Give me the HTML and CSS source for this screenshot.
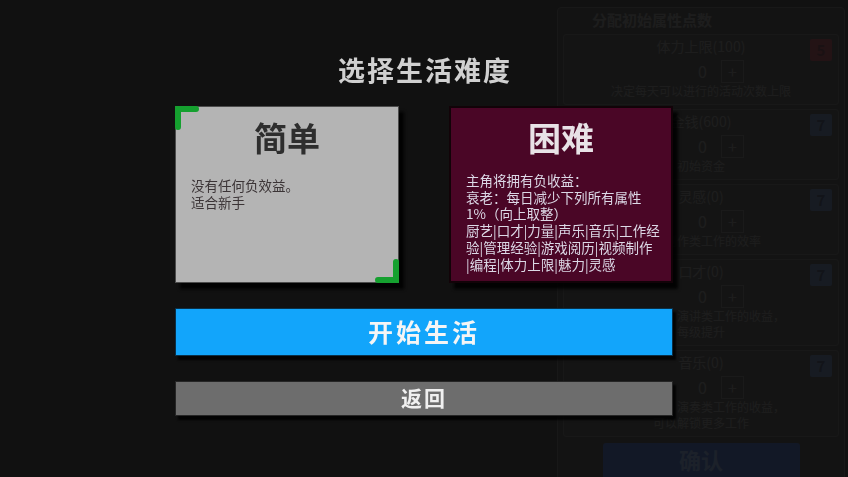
FILE: index.html
```html
<!DOCTYPE html>
<html lang="zh-CN">
<head>
    <meta charset="UTF-8">
    <meta name="viewport" content="width=device-width, initial-scale=1.0">
    <title>选择生活难度</title>
    <link rel="stylesheet" href="styles.css">
</head>
<body>

    <!-- 底层：初始属性分配面板 -->
    <div class="screen">
        <aside class="talent-panel">
            <div class="talent-title">分配初始属性点数</div>

            <div class="talent-row">
                <div class="talent-name">体力上限(100)</div>
                <div class="talent-ctrl"><span class="talent-num">0</span><span class="talent-add">+</span></div>
                <div class="talent-desc">决定每天可以进行的活动次数上限</div>
                <span class="talent-cost cost-red">5</span>
            </div>
            <div class="talent-row">
                <div class="talent-name">金钱(600)</div>
                <div class="talent-ctrl"><span class="talent-num">0</span><span class="talent-add">+</span></div>
                <div class="talent-desc">初始资金</div>
                <span class="talent-cost">7</span>
            </div>
            <div class="talent-row">
                <div class="talent-name">灵感(0)</div>
                <div class="talent-ctrl"><span class="talent-num">0</span><span class="talent-add">+</span></div>
                <div class="talent-desc">影响创作类工作的效率</div>
                <span class="talent-cost">7</span>
            </div>
            <div class="talent-row">
                <div class="talent-name">口才(0)</div>
                <div class="talent-ctrl"><span class="talent-num">0</span><span class="talent-add">+</span></div>
                <div class="talent-desc">影响直播、演讲类工作的收益，<br>每级提升</div>
                <span class="talent-cost">7</span>
            </div>
            <div class="talent-row">
                <div class="talent-name">音乐(0)</div>
                <div class="talent-ctrl"><span class="talent-num">0</span><span class="talent-add">+</span></div>
                <div class="talent-desc">影响作曲、演奏类工作的收益，<br>可以解锁更多工作</div>
                <span class="talent-cost">7</span>
            </div>

            <button class="confirm-btn">确认</button>
        </aside>
    </div>

    <!-- 难度选择弹窗 -->
    <div class="modal-mask">
        <div class="dialog">
            <h2 class="dialog-title">选择生活难度</h2>

            <div class="mode-list">
                <div class="mode-card mode-easy">
                    <svg class="corner corner-tl" width="24" height="24" viewBox="0 0 24 24">
                        <path d="M3 21 V3 H21" />
                    </svg>
                    <h3 class="mode-name">简单</h3>
                    <p class="mode-desc">没有任何负效益。<br>适合新手</p>
                    <svg class="corner corner-br" width="24" height="24" viewBox="0 0 24 24">
                        <path d="M3 21 H21 V3" />
                    </svg>
                </div>

                <div class="mode-card mode-hard">
                    <h3 class="mode-name">困难</h3>
                    <p class="mode-desc">主角将拥有负收益：<br>衰老：每日减少下列所有属性<br>1%（向上取整）<br>厨艺|口才|力量|声乐|音乐|工作经<br>验|管理经验|游戏阅历|视频制作<br>|编程|体力上限|魅力|灵感</p>
                </div>
            </div>

            <button class="btn-start">开始生活</button>
            <button class="btn-back">返回</button>
        </div>
    </div>

</body>
</html>
```

FILE: styles.css
```css
* {
    box-sizing: border-box;
}

body {
    margin: 0;
    width: 848px;
    height: 477px;
    overflow: hidden;
    background-color: #111111;
    font-family: "Noto Sans CJK SC", "Noto Sans", sans-serif;
}

button {
    font-family: inherit;
    padding: 0;
    cursor: pointer;
}

/* ---------- 底层面板（被遮罩压暗） ---------- */
.screen {
    height: 477px;
    display: flex;
    justify-content: flex-end;
    padding: 7px 3px 0 0;
}

.talent-panel {
    width: 288px;
    height: 480px;
    background-color: #262626;
    border: 1px solid #484848;
    border-radius: 4px;
    padding: 2px 5px 0;
    display: flex;
    flex-direction: column;
    gap: 4px;
}

.talent-title {
    padding-left: 29px;
    font-size: 15px;
    line-height: 20px;
    font-weight: bold;
    color: #777777;
}

.talent-row {
    position: relative;
    background-color: #2e2e2e;
    border: 1px solid #4a4a4a;
    border-radius: 3px;
    padding: 2px 0 5px;
    text-align: center;
    color: #777777;
}

.talent-name {
    font-size: 14px;
    line-height: 18px;
}

.talent-ctrl {
    display: flex;
    justify-content: center;
    align-items: center;
    gap: 14px;
    height: 24px;
    margin-top: 4px;
    padding-left: 40px;
    font-size: 16px;
}

.talent-add {
    width: 23px;
    height: 23px;
    border: 1px solid #5e5e5e;
    line-height: 20px;
}

.talent-desc {
    font-size: 12px;
    line-height: 16px;
}

/* 右上角的点数消耗 */
.talent-cost {
    position: absolute;
    top: 4px;
    right: 6px;
    width: 22px;
    height: 22px;
    border-radius: 2px;
    background-color: #42649e;
    color: #1a2a50;
    font-size: 15px;
    font-weight: bold;
    line-height: 22px;
}

.cost-red {
    background-color: #a02636;
    color: #5a1020;
}

.confirm-btn {
    width: 197px;
    height: 40px;
    margin: 2px auto 0;
    padding-bottom: 8px;
    border: none;
    border-radius: 3px;
    background-color: #1e4cb8;
    color: #6a94d8;
    font-size: 22px;
    font-weight: bold;
}

/* ---------- 弹窗 ---------- */
.modal-mask {
    position: fixed;
    top: 0;
    left: 0;
    right: 0;
    bottom: 0;
    background-color: rgba(17, 17, 17, 0.88);
    display: flex;
    justify-content: center;
}

.dialog {
    width: 498px;
    padding-top: 52px;
    display: flex;
    flex-direction: column;
}

.dialog-title {
    margin: 0 0 18px;
    text-align: center;
    font-size: 27px;
    line-height: 36px;
    font-weight: bold;
    letter-spacing: 2px;
    padding-left: 2px;
    color: #d0d0d0;
}

.mode-list {
    display: flex;
    justify-content: space-between;
}

.mode-card {
    position: relative;
    width: 224px;
    height: 177px;
    padding: 10px 15px 0;
    box-shadow: 5px 6px 3px rgba(0, 0, 0, 0.85);
}

.mode-easy {
    background-color: #b4b4b4;
    border: 1px solid #4c4c4c;
    color: #3b3436;
}

.mode-hard {
    background-color: #4a0626;
    border: 2px solid #120308;
    padding-top: 9px;
    color: #dcd8e6;
}

.mode-name {
    margin: 0;
    text-align: center;
    font-size: 33px;
    line-height: 40px;
    font-weight: bold;
}

.mode-easy .mode-name {
    color: #2e2e2e;
}

.mode-hard .mode-name {
    color: #e8e2e6;
}

.mode-desc {
    margin: 20px 0 0;
    font-size: 13.5px;
    line-height: 16.7px;
    white-space: nowrap;
}

.mode-hard .mode-desc {
    margin-top: 15px;
}

/* 选中卡片的绿色角标 */
.corner {
    position: absolute;
}

.corner path {
    fill: none;
    stroke: #15a02f;
    stroke-width: 6;
    stroke-linecap: round;
}

.corner-tl {
    top: -1px;
    left: -1px;
}

.corner-br {
    right: -1px;
    bottom: -1px;
}

.btn-start {
    height: 48px;
    margin-top: 25px;
    background-color: #12a5fb;
    border: 1px solid #0a3048;
    box-shadow: 3px 4px 2px rgba(0, 0, 0, 0.8);
    color: #f5f5f5;
    font-size: 25px;
    font-weight: bold;
    letter-spacing: 3px;
    padding-bottom: 2px;
}

.btn-back {
    height: 35px;
    margin-top: 25px;
    background-color: #6d6d6d;
    border: 1px solid #262626;
    box-shadow: 3px 4px 2px rgba(0, 0, 0, 0.8);
    color: #f0f0f0;
    font-size: 21px;
    font-weight: bold;
    letter-spacing: 2px;
    padding-bottom: 5px;
}
```
